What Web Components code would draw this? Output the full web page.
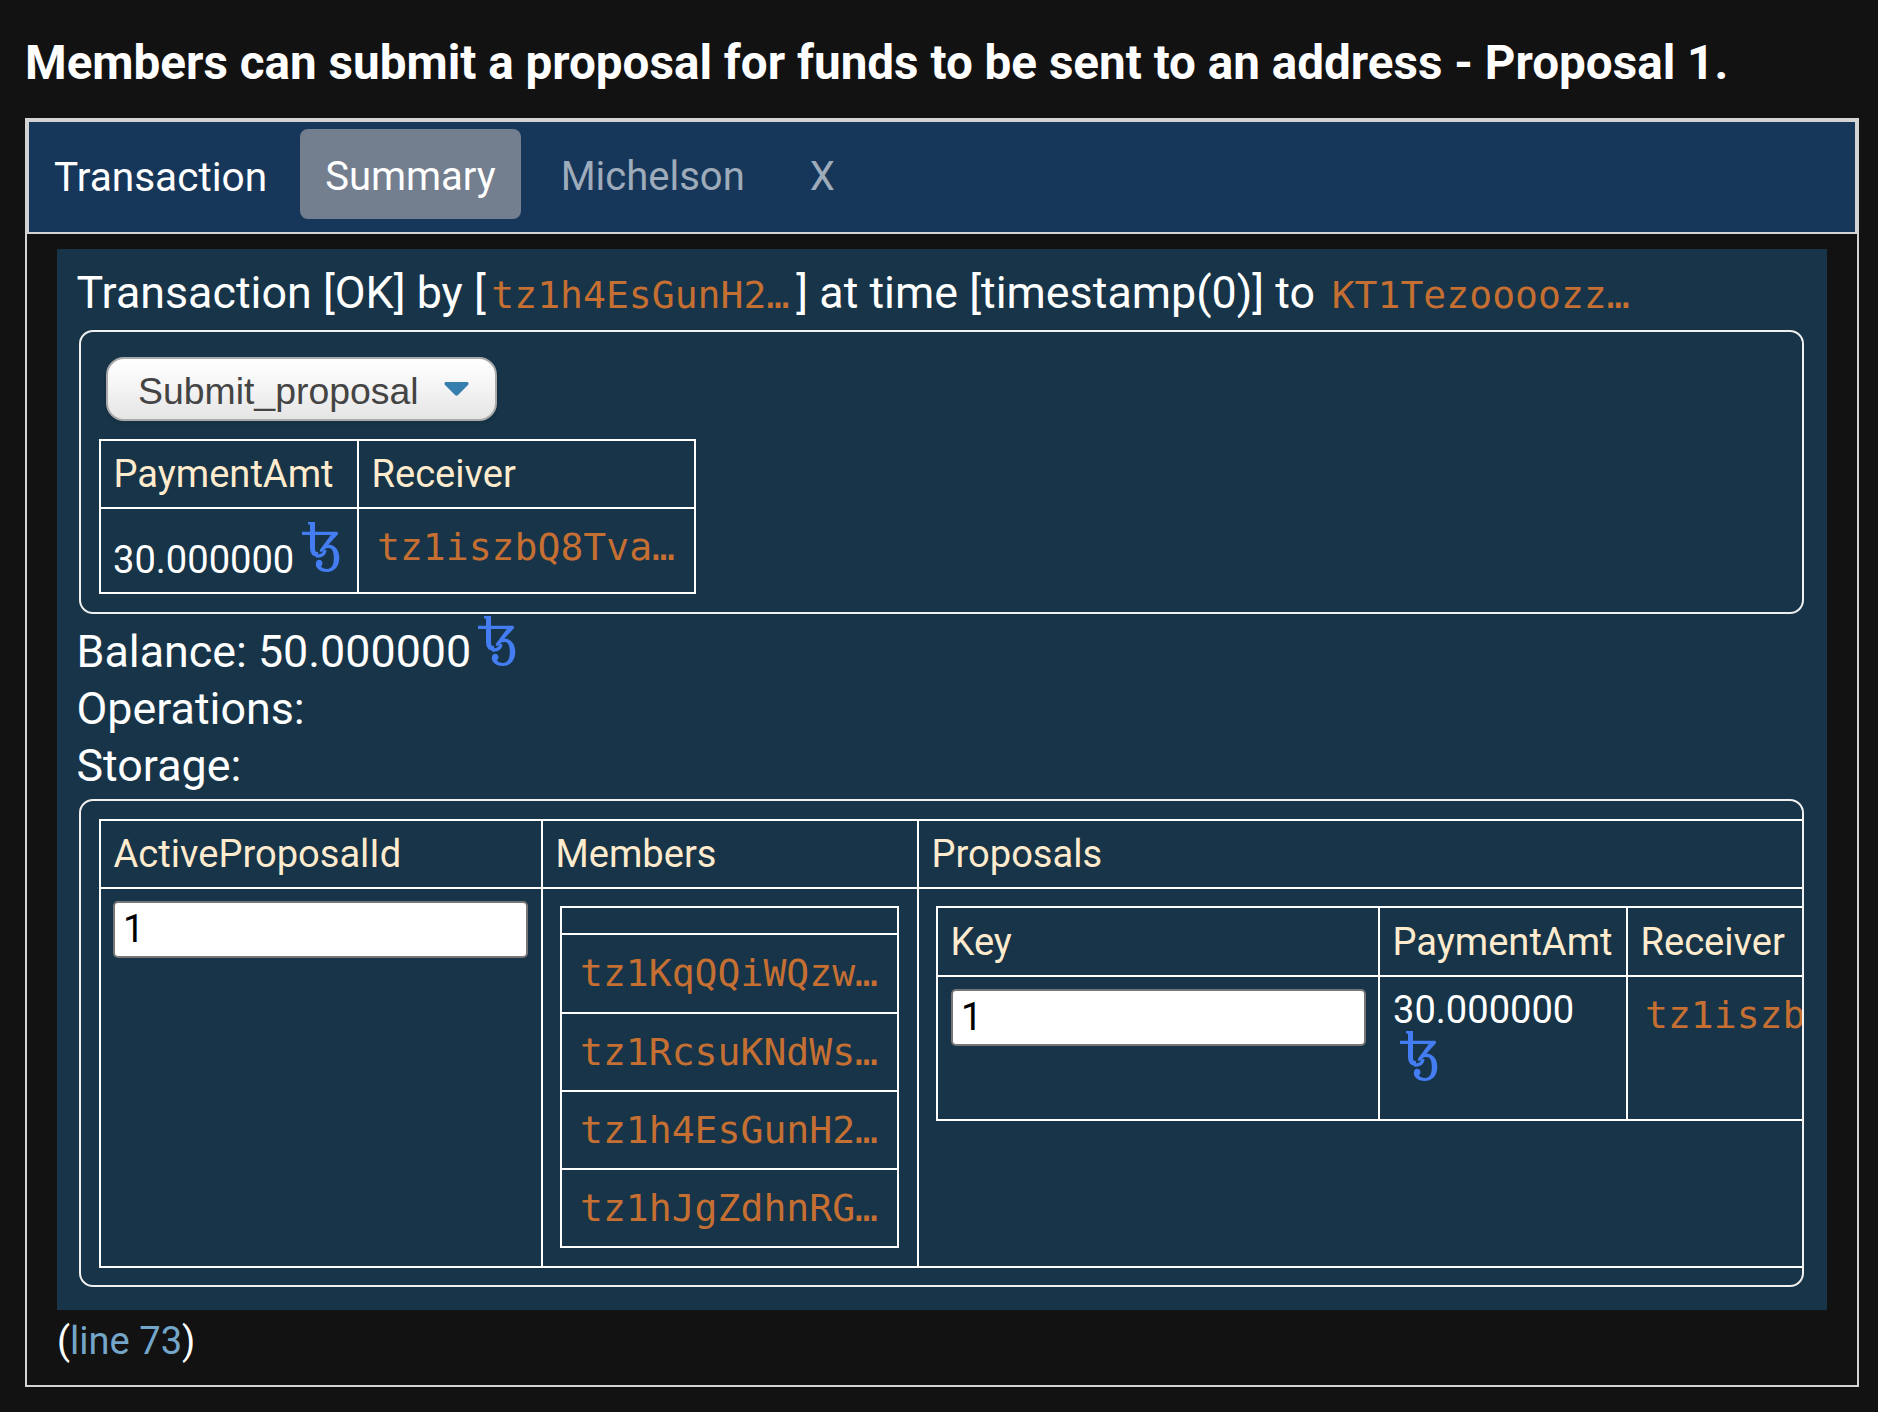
<!DOCTYPE html>
<html lang="en"><head><meta charset="utf-8"><title>Proposal</title>
<style>
html,body{margin:0;background:#121212}
body{width:1878px;height:1412px;overflow:hidden;font-family:Roboto,"Liberation Sans",sans-serif;color:#fff}
</style></head><body>
<scenario-page></scenario-page>
<script>
const define=(name,html,init)=>customElements.define(name,class extends HTMLElement{
  constructor(){super();const t=document.createElement('template');t.innerHTML=html;
    this.attachShadow({mode:'open'}).append(t.content.cloneNode(true));}
  connectedCallback(){if(init)init(this,this.shadowRoot);}
});

define('tez-icon',`<style>:host{display:block;flex:none;width:38px;height:52px;white-space:normal;line-height:0}svg{display:block}</style>
<svg width="38" height="53" viewBox="0 0 38 53" fill="none" stroke="#447df1">
<path stroke-width="3.200" d="M0 13.300H35"/>
<path stroke-width="5" d="M10.500 2V28.500C10.600 33 12.500 34.400 16 34.600"/>
<path stroke-width="3.200" d="M14 36C19 36.600 22.200 34 23.200 30"/>
<path stroke-width="2.600" d="M6 3.300H11"/>
<path stroke="none" fill="#447df1" d="M31 12H35.500L36.200 14L20.500 31L17.800 30Z"/>
<path stroke="none" fill="#447df1" d="M17.500 31.500C20 26.500 24 24.500 27 24.500C33 25 37.300 30 37.300 38C37.300 46.500 32 52 25 52C18.500 52 13.800 48.500 13.800 44C13.800 41.500 15.200 39.800 17 39.800C19 39.800 20.500 41.500 20.500 43.200C20.500 44.800 19.600 45.500 19 46.200C20 48 22 48.900 25 48.900C29.800 48.900 31.800 45 31.800 38C31.800 31 30 28 26.500 28C23.500 28.200 21.500 29.500 20 32Z"/></svg>`);

define('tz-address',`<style>:host{display:inline-block;font-family:"DejaVu Sans Mono",monospace;font-size:38.08px;line-height:44px;color:#c56f32;white-space:nowrap}</style><slot></slot>`);

define('tab-item',`<style>:host{display:flex;align-items:center;height:90px;box-sizing:border-box;padding:5px 25px 0;border-radius:8px;font-size:40px;color:#9eabba}
:host([heading]){padding:5px 0 0;font-size:40.6px;color:#fff}:host([active]){background:#737e8e;color:#fff}</style><slot></slot>`);

define('tab-bar',`<style>:host{display:flex;align-items:flex-start;padding:7px 25px 0;background:#17375a;border:2px solid #d3d3d3;height:103px}</style><slot></slot>`);

define('round-box',`<style>:host{display:block;box-sizing:border-box;margin-right:1px;border:2px solid #f0f0f0;border-radius:14px;padding:18px;overflow:hidden}</style><slot></slot>`);

define('data-grid',`<style>:host{display:grid;width:max-content;border:solid #fff;border-width:2px 0 0 2px;--pad:12px 13px}</style><slot></slot>`,
 el=>{el.style.gridTemplateColumns=el.getAttribute('cols');el.style.gridTemplateRows=el.getAttribute('rows');});

define('data-cell',`<style>:host{display:flex;align-items:flex-start;box-sizing:border-box;border:solid #fff;border-width:0 2px 2px 0;padding:var(--pad);font-size:38.08px;line-height:42px}
:host([head]){color:#ffebcd;align-items:center;padding:0 0 0 12.5px}:host([stack]){flex-direction:column}</style><slot></slot>`);

define('number-field',`<style>:host{display:block}input{display:block;box-sizing:border-box;width:415px;height:56.500px;border:2px solid #767676;border-radius:5px;background:#fff;color:#000;font:38.08px Roboto,sans-serif;padding:0 8px;margin:0;outline:0}</style><input type="text">`,
 (el,r)=>{r.querySelector('input').value=el.getAttribute('value');});

define('drop-select',`<style>:host{display:flex;box-sizing:border-box;width:391px;height:64px;align-items:center;justify-content:space-between;border:2px solid #aaa;border-radius:18px;padding:5px 26px 0 30px;background:linear-gradient(#fff,#f6f6f6 40%,#e5e5e5);color:#444;font:37.4px "Liberation Sans",sans-serif;box-shadow:0 2px 0 2px rgba(0,0,0,.05)}
svg{display:block;margin-top:-5px}</style><slot></slot><svg width="25" height="14" viewBox="0 0 25 14"><path d="M1.500 0H23.500Q25.500 1 24 3L14 13Q12.500 14.500 11 13L1 3Q-.500 1 1.500 0Z" fill="#367ead"/></svg>`);

define('info-line',`<style>:host{display:flex;align-items:flex-start;box-sizing:border-box;height:57px;line-height:57px;font-size:44.8px;white-space:pre;margin-left:-2.5px}</style><slot></slot>`);

define('scenario-page',`<style>
:host{display:flex;flex-direction:column;height:1412px;box-sizing:border-box;padding:0 19px 25px 25px}
h1{margin:0;height:118px;line-height:126px;font-size:47.6px;font-weight:700;white-space:nowrap}
.frame{width:1834px;height:1269px;box-sizing:border-box;border:2px solid #d3d3d3}
.panel{box-sizing:border-box;margin:15px 30px 0;width:1770px;height:1061px;padding:15px 22px 0;background:#173448}
.foot{margin:9px 0 0 30px;font-size:38.08px;line-height:44px}
a{color:#74a6ca}
.first{height:66px}.first tz-address{padding:9px 7px 0 5.5px}
data-cell tz-address{padding:3.500px 5px}
.bal{margin-top:9px;height:57px}.bal tez-icon{margin:-9px 0 0 6.500px}
</style>
<h1>Members can submit a proposal for funds to be sent to an address - Proposal 1.</h1>
<div class="frame">
 <tab-bar><tab-item heading style="margin-right:33px">Transaction</tab-item><tab-item active>Summary</tab-item><tab-item style="margin-left:15px">Michelson</tab-item><tab-item style="margin-left:15px">X</tab-item></tab-bar>
 <div class="panel">
  <info-line class="first">Transaction [OK] by [<tz-address>tz1h4EsGunH2…</tz-address>] at time [timestamp(0)] to <tz-address>KT1Tezoooozz…</tz-address></info-line>
  <round-box style="height:284px">
   <drop-select style="margin:7px 0 18px 7px">Submit_proposal</drop-select>
   <data-grid cols="258px 337px" rows="68px 85px">
    <data-cell head>PaymentAmt</data-cell><data-cell head>Receiver</data-cell>
    <data-cell style="--pad:12px"><span style="padding-top:18px">30.000000</span><tez-icon style="margin:-1px 0 0 8px"></tez-icon></data-cell>
    <data-cell><tz-address>tz1iszbQ8Tva…</tz-address></data-cell>
   </data-grid>
  </round-box>
  <info-line class="bal">Balance: 50.000000<tez-icon></tez-icon></info-line>
  <info-line>Operations:</info-line>
  <info-line>Storage:</info-line>
  <round-box style="height:488px;margin-top:5px">
   <data-grid cols="442px 376px 1160px" rows="68px 379px">
    <data-cell head>ActiveProposalId</data-cell><data-cell head>Members</data-cell><data-cell head>Proposals</data-cell>
    <data-cell style="--pad:12px"><number-field value="1"></number-field></data-cell>
    <data-cell style="--pad:17px">
     <data-grid cols="337px" rows="27px 79px 78px 78px 78px">
      <data-cell head></data-cell>
      <data-cell><tz-address>tz1KqQQiWQzw…</tz-address></data-cell>
      <data-cell><tz-address>tz1RcsuKNdWs…</tz-address></data-cell>
      <data-cell><tz-address>tz1h4EsGunH2…</tz-address></data-cell>
      <data-cell><tz-address>tz1hJgZdhnRG…</tz-address></data-cell>
     </data-grid></data-cell>
    <data-cell style="--pad:17px">
     <data-grid cols="442px 248px 336px" rows="69px 144px">
      <data-cell head>Key</data-cell><data-cell head>PaymentAmt</data-cell><data-cell head>Receiver</data-cell>
      <data-cell><number-field value="1"></number-field></data-cell>
      <data-cell stack><span>30.000000</span><tez-icon style="margin:-2px 0 0 7px"></tez-icon></data-cell>
      <data-cell style="--pad:12px"><tz-address>tz1iszb</tz-address></data-cell>
     </data-grid></data-cell>
   </data-grid>
  </round-box>
 </div>
 <div class="foot">(<a>line 73</a>)</div>
</div>`);
</script>
</body></html>
